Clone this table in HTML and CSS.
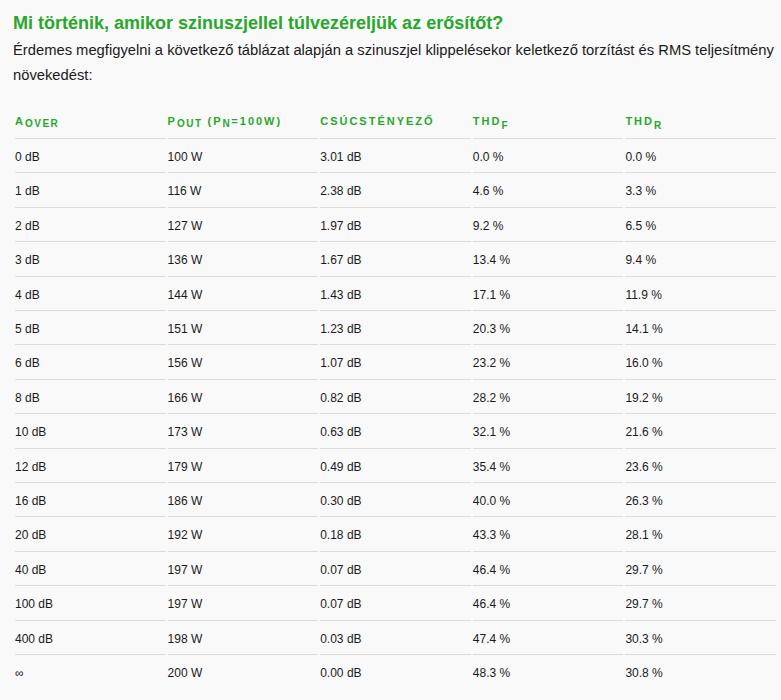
FILE: index.html
```html
<!DOCTYPE html>
<html lang="hu">
<head>
<meta charset="utf-8">
<title>Szinuszjel klippelés</title>
<link rel="stylesheet" href="styles.css">
</head>
<body>
<main class="page">
  <h2 class="title">Mi történik, amikor szinuszjellel túlvezéreljük az erősítőt?</h2>
  <p class="intro">Érdemes megfigyelni a következő táblázat alapján a szinuszjel klippelésekor keletkező torzítást és RMS teljesítmény növekedést:</p>
  <table class="data">
    <thead>
      <tr>
        <th>A<sub class="s1">OVER</sub></th>
        <th>P<sub class="s1">OUT</sub> (P<sub class="s1">N</sub>=100W)</th>
        <th>Csúcstényező</th>
        <th>THD<sub class="s2">F</sub></th>
        <th>THD<sub class="s2">R</sub></th>
      </tr>
    </thead>
    <tbody>
      <tr><td>0 dB</td><td>100 W</td><td>3.01 dB</td><td>0.0 %</td><td>0.0 %</td></tr>
      <tr><td>1 dB</td><td>116 W</td><td>2.38 dB</td><td>4.6 %</td><td>3.3 %</td></tr>
      <tr><td>2 dB</td><td>127 W</td><td>1.97 dB</td><td>9.2 %</td><td>6.5 %</td></tr>
      <tr><td>3 dB</td><td>136 W</td><td>1.67 dB</td><td>13.4 %</td><td>9.4 %</td></tr>
      <tr><td>4 dB</td><td>144 W</td><td>1.43 dB</td><td>17.1 %</td><td>11.9 %</td></tr>
      <tr><td>5 dB</td><td>151 W</td><td>1.23 dB</td><td>20.3 %</td><td>14.1 %</td></tr>
      <tr><td>6 dB</td><td>156 W</td><td>1.07 dB</td><td>23.2 %</td><td>16.0 %</td></tr>
      <tr><td>8 dB</td><td>166 W</td><td>0.82 dB</td><td>28.2 %</td><td>19.2 %</td></tr>
      <tr><td>10 dB</td><td>173 W</td><td>0.63 dB</td><td>32.1 %</td><td>21.6 %</td></tr>
      <tr><td>12 dB</td><td>179 W</td><td>0.49 dB</td><td>35.4 %</td><td>23.6 %</td></tr>
      <tr><td>16 dB</td><td>186 W</td><td>0.30 dB</td><td>40.0 %</td><td>26.3 %</td></tr>
      <tr><td>20 dB</td><td>192 W</td><td>0.18 dB</td><td>43.3 %</td><td>28.1 %</td></tr>
      <tr><td>40 dB</td><td>197 W</td><td>0.07 dB</td><td>46.4 %</td><td>29.7 %</td></tr>
      <tr><td>100 dB</td><td>197 W</td><td>0.07 dB</td><td>46.4 %</td><td>29.7 %</td></tr>
      <tr><td>400 dB</td><td>198 W</td><td>0.03 dB</td><td>47.4 %</td><td>30.3 %</td></tr>
      <tr><td>∞</td><td>200 W</td><td>0.00 dB</td><td>48.3 %</td><td>30.8 %</td></tr>
    </tbody>
  </table>
</main>
</body>
</html>
```

FILE: styles.css
```css
html, body {
  margin: 0;
  padding: 0;
  background: #f9f9f9;
}
body {
  font-family: "Liberation Sans", Arial, sans-serif;
  color: #1a1a1a;
}
.page {
  padding: 0 3px 0 13px;
}
.title {
  margin: 0;
  padding-top: 13px;
  font-size: 18px;
  line-height: 21px;
  font-weight: bold;
  color: #27a82a;
}
.intro {
  margin: 4px -3px 0 0;
  font-size: 14.75px;
  line-height: 25px;
}
.data {
  width: 100%;
  table-layout: fixed;
  border-collapse: separate;
  border-spacing: 2px;
  margin-top: 14px;
}
.data th {
  text-align: left;
  padding: 11px 0 10px;
  font-size: 11px;
  line-height: 13px;
  font-weight: bold;
  letter-spacing: 2px;
  text-transform: uppercase;
  color: #27a82a;
  border-bottom: 1px solid #dcdcdc;
  white-space: nowrap;
}
.data th sub {
  font-size: 10px;
  line-height: 0;
  letter-spacing: 1.5px;
}
.data th .s1 {
  vertical-align: -2px;
}
.data th .s2 {
  vertical-align: -4px;
  letter-spacing: 0;
}
.data td {
  padding: 9px 0 8px;
  font-size: 12px;
  line-height: 14.4px;
  border-bottom: 1px solid #dcdcdc;
}
.data tbody tr:last-child td {
  border-bottom: none;
}
```
